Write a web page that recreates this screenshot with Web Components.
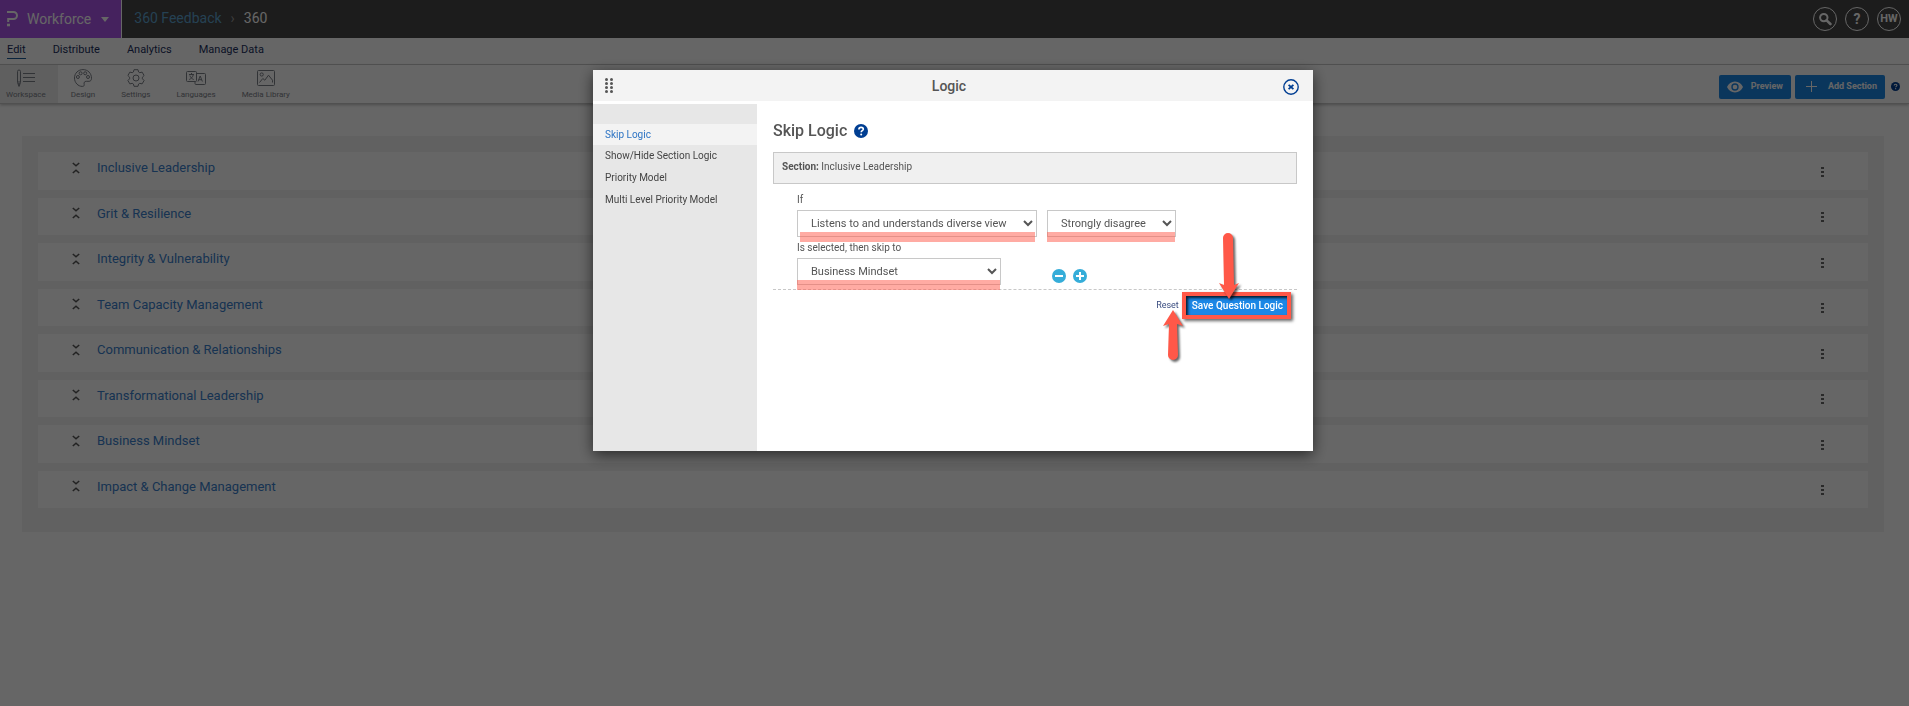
<!DOCTYPE html>
<html lang="en">
<head>
<meta charset="utf-8">
<meta name="viewport" content="width=device-width, initial-scale=1">
<title>360 Feedback</title>
<style>
  html, body {
    margin: 0;
    min-height: 100vh;
    background: #fff;
  }

  body {
    font-family: Roboto, 'Noto Sans', sans-serif;
    font-size: 13px;
    line-height: 1.5;
    color: #555;
  }
</style>
</head>
<body>
<survey-app></survey-app>

<script>
const icons = {
  logo: '<svg width="12" height="16" viewBox="0 0 12 16" fill="none" stroke="currentColor" stroke-width="2"><path d="M0 1h6.500a3.500 3.500 0 0 1 0 7H1.200v3"/><path d="M0 14h3" stroke-width="2.600"/></svg>',
  search: '<svg width="14" height="14" viewBox="0 0 14 14" fill="none" stroke="currentColor"><circle cx="5.800" cy="5.600" r="3.700" stroke-width="2"/><path d="M8.600 8.400l3.800 3.600" stroke-width="2.600" stroke-linecap="round"/></svg>',
  workspace: '<svg width="18" height="18" viewBox="0 0 18 18" fill="none" stroke="currentColor"><path d="M.5 2.500a1.500 1.500 0 0 1 3 0v11L2 17.500.5 13.500zM.5 13h3"/><path d="M2 14v3" stroke-width="1.500"/><path d="M6 4.500h12M6 8.500h12M6 12.500h12"/></svg>',
  design: '<svg width="18" height="18" viewBox="0 0 18 18" fill="none" stroke="currentColor"><path d="M9 .6C4.200.6.5 4.200.5 9s3.700 8.400 7.700 8.400c1.600 0 2.300-.8 2-2-.5-1.800.2-3.100 2.100-3.100h2.800c1.400 0 2.400-1.100 2.400-3C17.500 4.200 13.800.6 9 .6z"/><circle cx="3.900" cy="8" r="1.500"/><circle cx="6.600" cy="4.300" r="1.500"/><circle cx="11.200" cy="4.300" r="1.500"/><circle cx="14" cy="8" r="1.500"/></svg>',
  settings: '<svg width="18" height="18" viewBox="0 0 18 18" fill="none" stroke="currentColor" stroke-linejoin="round"><path d="M7 .7h4l.6 2.300 1.200.7 2.300-.6 2 3.400-1.700 1.700v1.600l1.700 1.700-2 3.400-2.300-.6-1.200.7-.6 2.300H7L6.400 15l-1.200-.7-2.300.6-2-3.400 1.700-1.700V8.200L.9 6.500l2-3.400 2.300.6L6.400 3z"/><circle cx="9" cy="9" r="3"/></svg>',
  languages: '<svg width="20" height="18" viewBox="0 0 20 18" fill="none" stroke="currentColor"><rect x=".5" y="2.500" width="10" height="10" rx="1"/><path d="M10.500 4.500h8a1 1 0 0 1 1 1v9a1 1 0 0 1-1 1H10a1 1 0 0 1-1-1v-2"/><path d="M3 5.500h5M5.500 4v1.500M7.300 5.500C7 8 5 9.800 3.200 10.500M3.900 6.500c.5 1.800 2 3.300 3.800 4"/><path d="M12 12.500l2.200-5.500 2.200 5.500M12.700 10.700h3"/></svg>',
  media: '<svg width="18" height="18" viewBox="0 0 18 18" fill="none" stroke="currentColor"><rect x=".5" y="1.500" width="17" height="15" rx="1"/><circle cx="4.700" cy="5.500" r="1.600"/><path d="M2.500 13.500l3.300-4 2 1.700 3.700-5 4 5v2.300"/></svg>',
  eye: '<svg width="16" height="12" viewBox="0 0 16 12"><path fill="currentColor" fill-rule="evenodd" d="M8 .5C4.400.5 1.500 2.700 0 6c1.500 3.300 4.400 5.500 8 5.500s6.500-2.200 8-5.500C14.500 2.700 11.600.5 8 .5zm0 9.200a3.700 3.700 0 1 1 0-7.400 3.700 3.700 0 0 1 0 7.400z"/><circle cx="8" cy="6" r="2.300" fill="currentColor"/></svg>',
  plus: '<svg width="11" height="11" viewBox="0 0 11 11" stroke="currentColor"><path d="M5.500 0v11M0 5.500h11"/></svg>',
  collapse: '<svg width="8" height="12" viewBox="0 0 8 12" fill="none" stroke="currentColor" stroke-width="1.500"><path d="M.8 1L4 3.800 7.200 1M.8 11L4 8.200 7.200 11"/></svg>',
  help: '<svg viewBox="0 0 14 14"><circle cx="7" cy="7" r="7" fill="currentColor"/><path d="M4.900 5.400c0-1.300.9-2 2.200-2s2.200.7 2.200 1.800c0 1.500-2.100 1.500-2.100 3" fill="none" stroke="#fff" stroke-width="1.600"/><circle cx="7.200" cy="10.400" r="1" fill="#fff"/></svg>',
  close: '<svg width="16" height="16" viewBox="0 0 16 16" fill="none" stroke="currentColor"><circle cx="8" cy="8" r="7.200" stroke-width="1.400"/><path d="M5.600 5.800l4.800 4.400M10.400 5.800l-4.800 4.400" stroke-width="1.800"/></svg>',
  remove: '<svg width="14" height="14" viewBox="0 0 14 14"><circle cx="7" cy="7" r="7" fill="currentColor"/><path d="M3 7h8" stroke="#fff" stroke-width="2"/></svg>',
  add: '<svg width="14" height="14" viewBox="0 0 14 14"><circle cx="7" cy="7" r="7" fill="currentColor"/><path d="M3 7h8M7 3v8" stroke="#fff" stroke-width="2"/></svg>'
}

class BaseElement extends HTMLElement {
  connectedCallback() {
    if (this.shadowRoot) return
    this.attachShadow({ mode: 'open' })
    this.render()
  }
}

class AppIcon extends BaseElement {
  render() {
    this.shadowRoot.innerHTML = `
      <style>
        :host { display: inline-flex; flex: none; }
        svg { display: block; }
      </style>
      ${icons[this.getAttribute('name')]}
    `
  }
}

class TopBar extends BaseElement {
  render() {
    this.shadowRoot.innerHTML = `
      <style>
        :host {
          display: flex;
          align-items: center;
          height: 38px;
          background: #464646;
          color: #fff;
          font-size: 14px;
        }
        .product {
          display: flex;
          align-items: center;
          align-self: stretch;
          gap: 8px;
          padding: 0 12px 0 7px;
          border: 0;
          border-right: 1px solid #fff;
          background: #ac55ec;
          color: #fff;
          font: inherit;
        }
        .caret {
          margin-left: 2px;
          border: 4px solid transparent;
          border-top: 5px solid #fff;
          border-bottom: 0;
        }
        .crumbs {
          display: flex;
          align-items: center;
          gap: 9px;
          flex: 1;
          padding: 0 0 2px 12px;
        }
        .crumbs a { color: #5ea3cf; text-decoration: none; }
        .crumbs i { color: #999; font-style: normal; }
        .actions { display: flex; gap: 8px; padding-right: 8px; }
        .actions button {
          display: grid;
          place-items: center;
          width: 24px;
          height: 24px;
          padding: 0;
          border: 1px solid #fff;
          border-radius: 50%;
          background: none;
          color: #fff;
          font: inherit;
          font-weight: 700;
        }
        .actions .user { font-size: 11px; }
      </style>
      <button class="product"><app-icon name="logo"></app-icon>Workforce<span class="caret"></span></button>
      <nav class="crumbs"><a href="#">360 Feedback</a><i>›</i><span>360</span></nav>
      <div class="actions">
        <button aria-label="Search"><app-icon name="search"></app-icon></button>
        <button>?</button>
        <button class="user">HW</button>
      </div>
    `
  }
}

class MainNav extends BaseElement {
  render() {
    this.shadowRoot.innerHTML = `
      <style>
        :host {
          display: flex;
          gap: 27px;
          padding: 3px 7px 6px;
          border-bottom: 1px solid #c8c8c8;
          font-size: 11px;
          line-height: 17px;
        }
        a { color: #1c2f60; text-decoration: none; }
        a[aria-current] { box-shadow: 0 1px #1b5a98; }
      </style>
      <a href="#" aria-current="page">Edit</a>
      <a href="#">Distribute</a>
      <a href="#">Analytics</a>
      <a href="#">Manage Data</a>
    `
  }
}

class ToolItem extends BaseElement {
  render() {
    this.shadowRoot.innerHTML = `
      <style>
        :host { display: block; }
        button {
          display: flex;
          flex-direction: column;
          align-items: center;
          gap: 2px;
          height: 38px;
          padding: 4px 13px 0;
          border: 0;
          background: none;
          color: #7c8088;
          font: inherit;
          font-size: 8px;
          line-height: 12px;
        }
        :host([active]) button { padding: 4px 12px 0 6px; background: #eee; }
      </style>
      <button><app-icon name="${this.getAttribute('icon')}"></app-icon><slot></slot></button>
    `
  }
}

class ToolBar extends BaseElement {
  render() {
    this.shadowRoot.innerHTML = `
      <style>
        :host {
          display: flex;
          align-items: center;
          border-bottom: 1px solid #c8c8c8;
          box-shadow: 0 1px 3px #bbb;
        }
        .right {
          display: flex;
          align-items: center;
          gap: 4px;
          margin-left: auto;
          padding: 5px 9px 0 0;
        }
        .right button {
          display: flex;
          align-items: center;
          height: 24px;
          padding: 0 8px;
          gap: 8px;
          border: 0;
          border-radius: 2px;
          background: #1b87e6;
          color: #fff;
          font: inherit;
          font-size: 9px;
          font-weight: 700;
        }
        .right .add { gap: 11px; padding-left: 11px; }
        .help { width: 9px; margin-left: 2px; color: #003e92; }
      </style>
      <tool-item icon="workspace" active>Workspace</tool-item>
      <tool-item icon="design">Design</tool-item>
      <tool-item icon="settings">Settings</tool-item>
      <tool-item icon="languages">Languages</tool-item>
      <tool-item icon="media">Media Library</tool-item>
      <div class="right">
        <button><app-icon name="eye"></app-icon>Preview</button>
        <button class="add"><app-icon name="plus"></app-icon>Add Section</button>
        <app-icon class="help" name="help"></app-icon>
      </div>
    `
  }
}

class SectionRow extends BaseElement {
  render() {
    this.shadowRoot.innerHTML = `
      <style>
        :host {
          display: flex;
          align-items: center;
          padding: 6px 44px 12px 34px;
          background: #fff;
        }
        app-icon { color: #555; }
        a {
          flex: 1;
          margin-left: 17px;
          color: #3a80cc;
          text-decoration: none;
        }
        button {
          display: grid;
          gap: 2px;
          padding: 0;
          border: 0;
          margin-top: 8px;
          background: none;
        }
        i { width: 3px; height: 2px; background: #666; }
      </style>
      <app-icon name="collapse"></app-icon>
      <a href="#"><slot></slot></a>
      <button aria-label="Section menu"><i></i><i></i><i></i></button>
    `
  }
}

class SectionList extends BaseElement {
  render() {
    this.shadowRoot.innerHTML = `
      <style>
        :host {
          display: flex;
          flex-direction: column;
          gap: 8px;
          margin: 32px 25px 0 22px;
          padding: 16px 16px 24px;
          background: #f3f3f3;
        }
      </style>
      <section-row>Inclusive Leadership</section-row>
      <section-row>Grit &amp; Resilience</section-row>
      <section-row>Integrity &amp; Vulnerability</section-row>
      <section-row>Team Capacity Management</section-row>
      <section-row>Communication &amp; Relationships</section-row>
      <section-row>Transformational Leadership</section-row>
      <section-row>Business Mindset</section-row>
      <section-row>Impact &amp; Change Management</section-row>
    `
  }
}

class ModalDialog extends BaseElement {
  render() {
    this.shadowRoot.innerHTML = `
      <style>
        :host {
          position: fixed;
          inset: 0;
          display: flex;
          justify-content: center;
          align-items: flex-start;
          padding: 70px 3px 0 0;
          background: rgba(0, 0, 0, .6);
        }
        .box {
          width: 720px;
          background: #fff;
          box-shadow: 0 4px 14px rgba(0, 0, 0, .6);
        }
        header {
          display: grid;
          grid-template-columns: 24px 1fr 24px;
          align-items: center;
          height: 31px;
          padding: 0 10px 0 12px;
          border-bottom: 3px solid #fff;
          background: #f3f3f3;
        }
        h2 {
          margin: 0;
          padding-right: 10px;
          font-size: 14px;
          font-weight: 500;
          line-height: 28px;
          text-align: center;
        }
        .drag { display: grid; grid-template-columns: 3px 3px; gap: 1px 2px; }
        .drag i { width: 3px; height: 3px; border-radius: 50%; background: #555; }
        header button {
          justify-self: center;
          padding: 6px 0 0;
          border: 0;
          background: none;
          color: #003e92;
        }
        .body { display: flex; min-height: 347px; }
      </style>
      <div class="box" role="dialog" aria-labelledby="title">
        <header>
          <span class="drag">${'<i></i>'.repeat(8)}</span>
          <h2 id="title"><slot name="title"></slot></h2>
          <button aria-label="Close"><app-icon name="close"></app-icon></button>
        </header>
        <div class="body"><slot></slot></div>
      </div>
    `
  }
}

class LogicMenu extends BaseElement {
  render() {
    this.shadowRoot.innerHTML = `
      <style>
        :host {
          display: flex;
          flex-direction: column;
          width: 164px;
          box-sizing: border-box;
          padding-top: 20px;
          background: #e7e7e7;
          font-size: 10px;
          line-height: 22px;
        }
        a { padding-left: 12px; color: #444; text-decoration: none; }
        a[aria-current] { line-height: 21px; background: #f3f3f3; color: #2d74c4; }
      </style>
      <a href="#" aria-current="page">Skip Logic</a>
      <a href="#">Show/Hide Section Logic</a>
      <a href="#">Priority Model</a>
      <a href="#">Multi Level Priority Model</a>
    `
  }
}

class MarkedField extends BaseElement {
  render() {
    this.shadowRoot.innerHTML = `
      <style>
        :host { position: relative; display: block; }
        :host::after {
          content: '';
          position: absolute;
          left: 0;
          right: 1px;
          bottom: -5px;
          height: 10px;
          background: rgba(255, 88, 72, .5);
          pointer-events: none;
        }
        :host([inset])::after { left: 3px; right: 2px; }
        select {
          display: block;
          width: 100%;
          height: 27px;
          padding: 0 13px 0 9px;
          border: 1px solid #c8c8c8;
          border-radius: 0;
          background: #fff;
          color: #555;
          font: inherit;
          font-size: 11px;
        }
      </style>
      <select aria-label="${this.getAttribute('label')}"><option>${this.getAttribute('value')}</option></select>
    `
  }
}

class ArrowMark extends BaseElement {
  render() {
    this.shadowRoot.innerHTML = `
      <style>
        :host { position: absolute; pointer-events: none; }
        :host([up]) svg { transform: rotate(180deg); }
        svg { display: block; overflow: visible; }
        .wrap { filter: drop-shadow(2px 2px 1px rgba(0, 0, 0, .6)); }
      </style>
      <div class="wrap">${this.hasAttribute('up')
        ? '<svg width="20" height="50"><path fill="#ff5848" d="M5 5a5 5 0 0 1 10 0l-1 31 6-2-10 16L0 34l6 2z"/></svg>'
        : '<svg width="20" height="66"><path fill="#ff5848" d="M4 5a5 5 0 0 1 10 0l1 47 5-2-10 16L0 50l5 2z"/></svg>'}
      </div>
    `
  }
}

class SkipLogic extends BaseElement {
  render() {
    this.shadowRoot.innerHTML = `
      <style>
        :host { flex: 1; display: block; padding: 14px 16px 0; font-size: 10px; }
        h3 {
          display: flex;
          align-items: center;
          gap: 7px;
          margin: 0 0 8px;
          font-size: 16px;
          font-weight: 500;
          line-height: 26px;
        }
        h3 app-icon { width: 14px; color: #003e92; }
        .section {
          padding: 0 8px 2px;
          border: 1px solid #c8c8c8;
          background: #f0f0f0;
          line-height: 28px;
        }
        .rule {
          padding: 5px 0 4px 24px;
          border-bottom: 1px dashed #c8c8c8;
          line-height: 21px;
        }
        .line { display: flex; align-items: center; gap: 10px; }
        .question { width: 240px; }
        .answer { width: 129px; }
        .target { width: 204px; }
        .buttons { display: flex; gap: 7px; margin: 6px 0 -6px 41px; }
        .buttons button { display: block; padding: 0; border: 0; background: none; color: #35add9; }
        footer {
          position: relative;
          display: flex;
          justify-content: flex-end;
          align-items: center;
          gap: 3px;
          padding: 2px 6px 0 0;
        }
        footer a { color: #3a4d80; font-size: 9px; text-decoration: none; }
        .save {
          height: 27px;
          box-sizing: border-box;
          padding: 0 4px 0 6px;
          border: 4px solid #ff5848;
          background: #1b87e6;
          box-shadow: 2px 2px 3px rgba(0, 0, 0, .6), inset 2px 2px 3px rgba(0, 0, 0, .8);
          color: #fff;
          font: inherit;
          font-weight: 500;
        }
        .to-save { right: 58px; top: -57px; }
        .to-reset { right: 114px; top: 20px; }
      </style>
      <h3>Skip Logic <app-icon name="help"></app-icon></h3>
      <div class="section"><b>Section:</b> Inclusive Leadership</div>
      <div class="rule">
        <div>If</div>
        <div class="line">
          <marked-field class="question" inset label="Question" value="Listens to and understands diverse viewpoints"></marked-field>
          <marked-field class="answer" label="Answer" value="Strongly disagree"></marked-field>
        </div>
        <div>Is selected, then skip to</div>
        <div class="line">
          <marked-field class="target" label="Skip to" value="Business Mindset"></marked-field>
          <div class="buttons">
            <button aria-label="Remove rule"><app-icon name="remove"></app-icon></button>
            <button aria-label="Add rule"><app-icon name="add"></app-icon></button>
          </div>
        </div>
      </div>
      <footer>
        <a href="#">Reset</a>
        <button class="save">Save Question Logic</button>
        <arrow-mark class="to-save"></arrow-mark>
        <arrow-mark class="to-reset" up></arrow-mark>
      </footer>
    `
  }
}

class SurveyApp extends BaseElement {
  render() {
    this.shadowRoot.innerHTML = `
      <style>
        :host { display: block; }
      </style>
      <top-bar></top-bar>
      <main-nav></main-nav>
      <tool-bar></tool-bar>
      <section-list></section-list>
      <modal-dialog>
        <span slot="title">Logic</span>
        <logic-menu></logic-menu>
        <skip-logic></skip-logic>
      </modal-dialog>
    `
  }
}

customElements.define('app-icon', AppIcon)
customElements.define('top-bar', TopBar)
customElements.define('main-nav', MainNav)
customElements.define('tool-item', ToolItem)
customElements.define('tool-bar', ToolBar)
customElements.define('section-row', SectionRow)
customElements.define('section-list', SectionList)
customElements.define('modal-dialog', ModalDialog)
customElements.define('logic-menu', LogicMenu)
customElements.define('marked-field', MarkedField)
customElements.define('arrow-mark', ArrowMark)
customElements.define('skip-logic', SkipLogic)
customElements.define('survey-app', SurveyApp)
</script>
</body>
</html>
